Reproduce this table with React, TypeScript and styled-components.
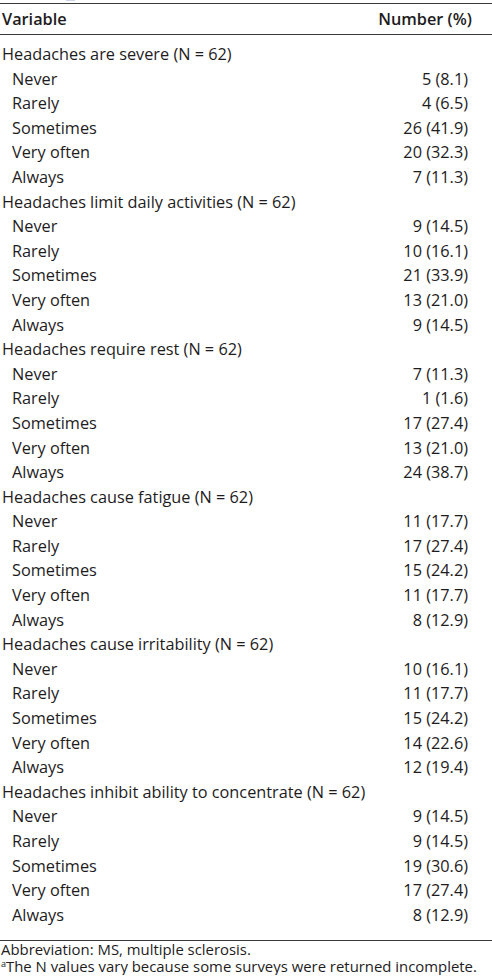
import React from "react";
import styled, { createGlobalStyle } from "styled-components";

const GlobalStyle = createGlobalStyle`
  html, body {
    margin: 0;
    padding: 0;
    background: #ffffff;
  }
`;

const Page = styled.div`
  width: 492px;
  font-family: "Open Sans", "Noto Sans", sans-serif;
  color: #1e1c1d;
`;

// remnant of the caption cut off at the top edge
const CutEdge = styled.div`
  height: 3px;
  display: flex;
  align-items: flex-start;
  padding-left: 66px;
`;

const CutMark = styled.span`
  width: 9px;
  height: 1px;
  background: #c9d3ea;
`;

const Table = styled.div`
  border-top: 1px solid #3a3a3a;
  border-bottom: 1px solid #3a3a3a;
  padding-bottom: 13px;
`;

const HeadRow = styled.div`
  display: flex;
  justify-content: space-between;
  height: 30px;
  padding: 0 20px 0 2px;
  border-bottom: 1px solid #3a3a3a;
  font-size: 16.3px;
  font-weight: 600;
  line-height: 30px;
`;

const Body = styled.div`
  padding-top: 7px;
`;

const Row = styled.div<{ $sub?: boolean }>`
  display: flex;
  justify-content: space-between;
  height: 24.6px;
  line-height: 24.6px;
  font-size: 16.3px;
  padding: 0 24px 0 ${p => (p.$sub ? "12px" : "2px")};
  white-space: nowrap;
`;

const Notes = styled.div`
  padding: 0 0 0 1px;
  font-size: 14.9px;
  line-height: 17px;
  white-space: nowrap;
`;

const Sup = styled.sup`
  font-size: 9px;
  vertical-align: 5px;
  line-height: 0;
`;

const levels = ["Never", "Rarely", "Sometimes", "Very often", "Always"];

const groups: { title: string; values: string[] }[] = [
  { title: "Headaches are severe (N = 62)", values: ["5 (8.1)", "4 (6.5)", "26 (41.9)", "20 (32.3)", "7 (11.3)"] },
  { title: "Headaches limit daily activities (N = 62)", values: ["9 (14.5)", "10 (16.1)", "21 (33.9)", "13 (21.0)", "9 (14.5)"] },
  { title: "Headaches require rest (N = 62)", values: ["7 (11.3)", "1 (1.6)", "17 (27.4)", "13 (21.0)", "24 (38.7)"] },
  { title: "Headaches cause fatigue (N = 62)", values: ["11 (17.7)", "17 (27.4)", "15 (24.2)", "11 (17.7)", "8 (12.9)"] },
  { title: "Headaches cause irritability (N = 62)", values: ["10 (16.1)", "11 (17.7)", "15 (24.2)", "14 (22.6)", "12 (19.4)"] },
  { title: "Headaches inhibit ability to concentrate (N = 62)", values: ["9 (14.5)", "9 (14.5)", "19 (30.6)", "17 (27.4)", "8 (12.9)"] },
];

export default function App() {
  return (
    <Page>
      <GlobalStyle />
      <CutEdge>
        <CutMark />
      </CutEdge>
      <Table>
        <HeadRow>
          <span>Variable</span>
          <span>Number (%)</span>
        </HeadRow>
        <Body>
          {groups.map(g => (
            <React.Fragment key={g.title}>
              <Row>
                <span>{g.title}</span>
              </Row>
              {levels.map((l, i) => (
                <Row $sub key={l}>
                  <span>{l}</span>
                  <span>{g.values[i]}</span>
                </Row>
              ))}
            </React.Fragment>
          ))}
        </Body>
      </Table>
      <Notes>
        <div>Abbreviation: MS, multiple sclerosis.</div>
        <div>
          <Sup>a</Sup>The N values vary because some surveys were returned incomplete.
        </div>
      </Notes>
    </Page>
  );
}
